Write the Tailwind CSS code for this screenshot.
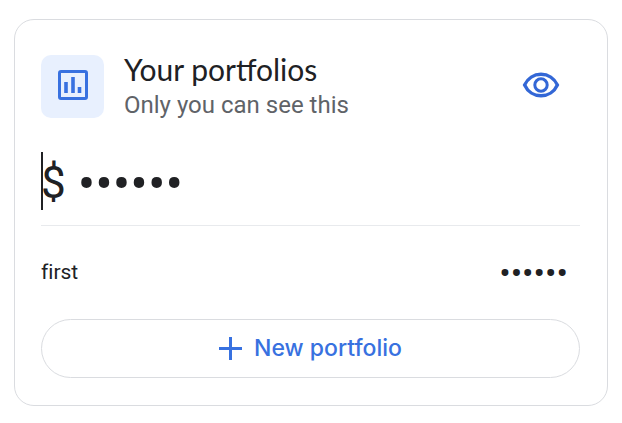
<!DOCTYPE html>
<html lang="en">
<head>
<meta charset="utf-8">
<meta name="viewport" content="width=device-width, initial-scale=1">
<title>Your portfolios</title>
<script src="https://cdn.jsdelivr.net/npm/@tailwindcss/browser@4"></script>
</head>
<body class="bg-white px-3.5 pt-[19px] font-['Roboto',sans-serif] text-[#202124]">
<main class="rounded-[20px] border border-[#dadce0] pt-[35px] pr-[27px] pb-[27px] pl-[26px]">
  <header class="flex h-[63px] items-center">
    <div class="flex size-[63px] shrink-0 items-center justify-center rounded-[10px] bg-[#e8f0fe]">
      <svg class="mb-1 size-[30px]" viewBox="0 0 30 30" fill="none" stroke="#3871e0" stroke-width="3" aria-hidden="true">
        <rect x="1.5" y="1.5" width="27" height="27" rx="1.5"/>
        <path d="M8 12v11M15 7v16M21.5 17v6" stroke-width="3.6"/>
      </svg>
    </div>
    <div class="ml-5 min-w-0 flex-1">
      <h1 class="font-['Lato',sans-serif] text-[30px] leading-9">Your portfolios</h1>
      <p class="text-2xl leading-9 text-[#5f6368]">Only you can see this</p>
    </div>
    <button type="button" aria-label="Show balances" class="mr-5 mb-1 flex h-12 w-[38px] items-center justify-center">
      <svg class="h-[26px] w-[38px]" viewBox="0 0 38 26" fill="none" stroke="#3367d6" stroke-width="3.4" aria-hidden="true">
        <path d="M2.6 13C5.6 6.4 12 2.2 19 2.2S32.4 6.4 35.4 13C32.4 19.6 26 23.8 19 23.8S5.6 19.6 2.6 13Z"/>
        <circle cx="19" cy="13" r="6.2" stroke-width="3"/>
      </svg>
    </button>
  </header>
  <div class="relative mt-[34px] flex h-[58px] items-center">
    <span class="absolute inset-y-0 left-0 w-0.5 bg-[#202124]"></span>
    <span class="pt-1 text-[44px] leading-[58px]">$</span>
    <span class="ml-3 pt-2 text-[52px] leading-[58px]">••••••</span>
  </div>
  <hr class="mt-[15px] border-[#e8eaed]">
  <div class="flex h-[93px] items-center justify-between pr-3">
    <span class="text-[21px] [font-variant-ligatures:none]">first</span>
    <span class="text-[34px] leading-8">••••••</span>
  </div>
  <button type="button" class="flex h-[59px] w-full items-center justify-center gap-3 rounded-full border border-[#dadce0] font-['Inter',sans-serif] text-[23px] font-medium text-[#3871e0]">
    <svg class="size-[23px]" viewBox="0 0 23 23" stroke="#3871e0" stroke-width="3" aria-hidden="true"><path d="M11.5 0v23M0 11.5h23"/></svg>
    New portfolio
  </button>
</main>
</body>
</html>
